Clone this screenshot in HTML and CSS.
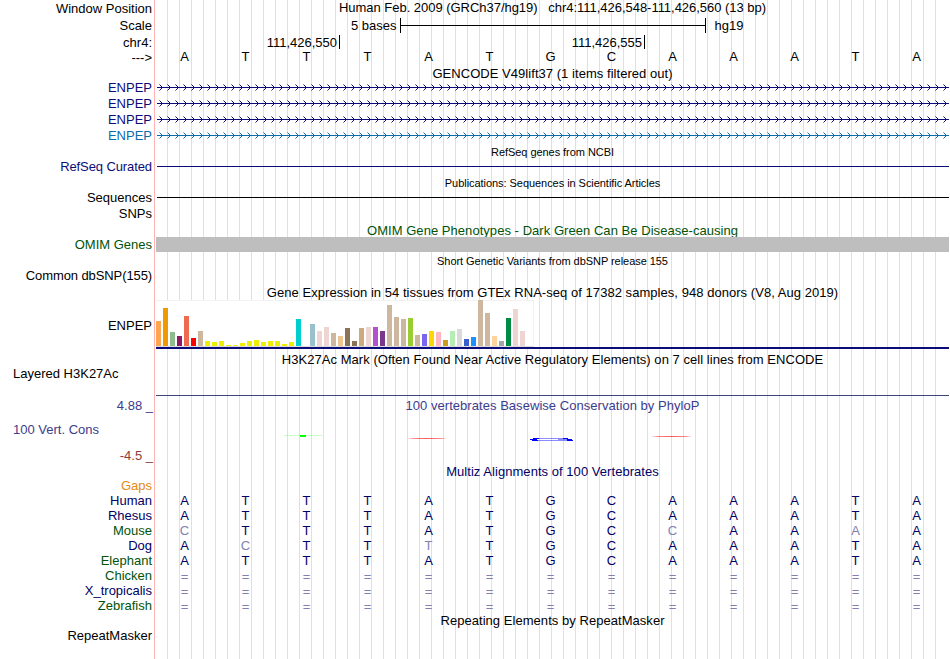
FILE: index.html
```html
<!DOCTYPE html>
<html lang="en">
<head>
<meta charset="utf-8">
<title>Genome Browser</title>
<link rel="stylesheet" href="styles.css">
</head>
<body>
<main class="browser" id="browser"></main>
<script src="tracks.js"></script>
</body>
</html>
```
FILE: styles.css
```css
* { box-sizing: border-box; }
body { margin: 0; background: #fff; }
.browser {
  width: 949px;
  height: 659px;
  overflow: hidden;
  display: flex;
  flex-direction: column;
  font-family: "Liberation Sans", Arial, sans-serif;
  font-size: 13px;
  color: #000;
  background:
    linear-gradient(#ffb4b4, #ffb4b4) 154px 0 / 1px 100% no-repeat,
    repeating-linear-gradient(90deg, #dcdcff 0 1px, transparent 1px 12px) 167px 0 / 780px 100% no-repeat;
}
.row { display: grid; grid-template-columns: 156px 793px; grid-template-rows: 100%; flex: none; white-space: pre; }
.label { display: flex; align-items: center; justify-content: flex-end; padding-right: 4px; line-height: 15px; min-width: 0; min-height: 0; }
.label.left { justify-content: flex-start; padding-left: 13px; }
.label.tick { padding-right: 3px; }
.label.raised { padding-bottom: 1px; }
.label.left.raised { padding-bottom: 2px; }
.label.lowered { padding-top: 2px; }
.label.high { padding-bottom: 11px; }
.label.snug { letter-spacing: -.1px; }
.data { display: flex; align-items: center; min-width: 0; min-height: 0; line-height: 15px; }
.title { justify-content: center; letter-spacing: .045px; }
.title.position { letter-spacing: -.03px; padding-bottom: 2px; }
.title.drop { padding-top: 2px; }
.title.end { padding-top: 0; }
.small { font-size: 11px; letter-spacing: -.05px; padding-top: 2px; }
.bases { display: grid; grid-template-columns: repeat(13, 61px); margin-left: -2px; text-align: center; }
.bases.up { align-items: start; margin-top: -1px; }
.bases.unaligned { padding-top: 1px; }
.data svg { display: block; flex: none; }
.navy { color: #0c0c78; }
.blue { color: #0b6cab; }
.green { color: #00540a; }
.purple { color: #3c3c8c; }
.maroon { color: #8c3c3c; }
.orange { color: #e68a13; }
.deep { color: #000064; }
.faded { color: #8080b1; }
.scale { padding-left: 195px; }
.scale svg { margin: 0 9px 0 3px; }
.mark { width: 184px; height: 14px; border-right: 1px solid #000; text-align: right; padding-right: 2px; }
.mark.next { width: 305px; }
.bar { background: #bebebe; }
.expression { align-items: flex-start; border-bottom: 2px solid #0c0c78; }
.chart { display: flex; align-items: flex-end; gap: 2px; width: 378px; height: 47px; background: #fff; border: 1px solid #f2f2f2; border-left: 0; border-bottom-color: #dcdcdc; overflow: visible; }
.chart i { width: 5px; flex: none; }
```
FILE: tracks.js
```js
const browser = document.getElementById('browser');

function row(height, label, labelClass, data, dataClass) {
  browser.insertAdjacentHTML('beforeend',
    `<div class="row" style="height:${height}px"><div class="label ${labelClass}">${label}</div>` +
    `<div class="data ${dataClass || ''}">${data || ''}</div></div>`);
}

function title(height, text, cls) { row(height, '', '', text, 'title ' + (cls || '')); }

// Lower-case letters are bases that differ from the reference.
function bases(height, label, labelClass, seq, cls) {
  const cells = [...seq].map(b =>
    `<span class="${/[a-z=]/.test(b) ? 'faded' : ''}">${b.toUpperCase()}</span>`).join('');
  row(height, label, labelClass, cells, 'bases ' + cls);
}

function gene(color, cls, id) {
  row(16, 'ENPEP', 'raised ' + cls,
    `<svg width="793" height="16" shape-rendering="crispEdges"><defs><pattern id="${id}" x="2" width="8" height="16" patternUnits="userSpaceOnUse">
    <g fill="${color}"><path d="M3 6h1v1h-1zM3 8h1v1h-1zM2 5h1v1h-1zM2 9h1v1h-1z"/><path opacity=".5" d="M1 4h1v1h-1zM1 10h1v1h-1z"/></g></pattern></defs>
    <rect x="2" width="791" height="16" fill="url(#${id})"/><path d="M1 7h792v1H1z" fill="${color}"/></svg>`);
}

function line(height, label, cls, y, color, x) {
  row(height, label, cls,
    `<svg width="793" height="${height}" shape-rendering="crispEdges"><path d="M${x} ${y}h793v1H${x}z" fill="${color}"/></svg>`);
}

title(16, 'Human Feb. 2009 (GRCh37/hg19)   chr4:111,426,548-111,426,560 (13 bp)', 'position');
browser.lastChild.firstChild.textContent = 'Window Position';
row(18, 'Scale', '',
  '<span>5 bases</span><svg width="306" height="15" shape-rendering="crispEdges"><path d="M0 0h1v15H0zM305 0h1v15h-1zM0 7h306v1H0z"/></svg><span>hg19</span>', 'scale');
row(16, 'chr4:', '', '<span class="mark">111,426,550</span><span class="mark next">111,426,555</span>');
bases(16, '---&gt;', 'raised', 'ATTTATGCAAATA', 'up');
title(14, 'GENCODE V49lift37 (1 items filtered out)');
gene('#0c0c78', 'navy', 'arrows-a');
gene('#0c0c78', 'navy', 'arrows-b');
gene('#0c0c78', 'navy', 'arrows-c');
gene('#0b6cab', 'blue', 'arrows-d');
title(15, 'RefSeq genes from NCBI', 'small');
line(16, 'RefSeq Curated', 'navy raised snug', 7, '#0c0c78', 1);
title(15, 'Publications: Sequences in Scientific Articles', 'small');
line(16, 'Sequences', 'raised', 7, '#000', 1);
row(16, 'SNPs', 'raised');
title(15, 'OMIM Gene Phenotypes - Dark Green Can Be Disease-causing', 'green drop');
row(15, 'OMIM Genes', 'green', '', 'bar');
title(16, 'Short Genetic Variants from dbSNP release 155', 'small');
row(16, 'Common dbSNP(155)', 'raised snug');
title(16, 'Gene Expression in 54 tissues from GTEx RNA-seq of 17382 samples, 948 donors (V8, Aug 2019)');

const tissues = [
  [25,'#ffa54f'],[38,'#ee9a00'],[14,'#8fbc8f'],[10,'#8b1c62'],[30,'#ee6a50'],[8,'#ff0000'],[15,'#cdb79e'],
  [5,'#eeee00'],[4,'#eeee00'],[5,'#eeee00'],[1,'#eeee00'],[1,'#eeee00'],[3,'#eeee00'],[5,'#eeee00'],
  [6,'#eeee00'],[4,'#eeee00'],[5,'#eeee00'],[5,'#eeee00'],[2,'#eeee00'],[4,'#eeee00'],[27,'#00cdcd'],
  [0,'#ee82ee'],[22,'#9ac0cd'],[15,'#eed5d2'],[19,'#eed5d2'],[13,'#cdb79e'],[10,'#eec591'],[18,'#8b7355'],
  [5,'#8b7355'],[18,'#cdaa7d'],[19,'#eed5d2'],[19,'#b452cd'],[15,'#7a378b'],[41,'#cdb79e'],[29,'#cdb79e'],
  [27,'#cdb79e'],[28,'#9acd32'],[11,'#cdb79e'],[12,'#7a67ee'],[15,'#ffd700'],[14,'#ffb6c1'],[6,'#cd9b1d'],
  [15,'#b4eeb4'],[17,'#d9d9d9'],[7,'#3a5fcd'],[9,'#1e90ff'],[46,'#cdb79e'],[33,'#cdb79e'],[10,'#ffd39b'],
  [5,'#a6a6a6'],[28,'#008b45'],[37,'#eed5d2'],[15,'#eed5d2'],[0,'#ff00ff']
];
row(49, 'ENPEP', 'lowered', '<div class="chart">' +
  tissues.map(([h, c]) => `<i style="height:${h}px;background:${c}"></i>`).join('') + '</div>', 'expression');

row(3, '', '');
title(15, 'H3K27Ac Mark (Often Found Near Active Regulatory Elements) on 7 cell lines from ENCODE');
row(14, 'Layered H3K27Ac', 'left raised');
row(14, '', '');
line(2, '', '', 0, '#3c4678', 0);
row(1, '', '');
row(15, '4.88 _', 'purple tick', '100 vertebrates Basewise Conservation by PhyloP', 'title purple');
row(9, '', '');
row(26, '100 Vert. Cons', 'left purple high',
  `<svg width="793" height="26"><defs>
  <linearGradient id="fade"><stop offset="0" stop-color="#f00" stop-opacity="0"/><stop offset=".15" stop-color="#f00" stop-opacity=".45"/><stop offset=".5" stop-color="#f00" stop-opacity=".65"/><stop offset=".85" stop-color="#f00" stop-opacity=".45"/><stop offset="1" stop-color="#f00" stop-opacity="0"/></linearGradient></defs>
  <path d="M128 13h38v1h-38z" fill="#0f0" opacity=".22"/><path d="M144 13h6v2h-6z" fill="#0f0"/>
  <path d="M251 16h40v1h-40z" fill="url(#fade)"/><path d="M495 14h41v1h-41z" fill="url(#fade)"/>
  <path d="M379 16h33v1h-33zM381 18h32v1h-32zM402 17h12v1h-12z" fill="#00f" opacity=".45"/><path d="M377 16h6v1h-6zM374 17h7v1h-7zM376 18h6v1h-6zM407 16h5v1h-5zM411 17h5v1h-5zM411 18h6v1h-6z" fill="#00f"/></svg>`);
row(14, '-4.5 _', 'maroon tick');
row(2, '', '');
title(14, 'Multiz Alignments of 100 Vertebrates', 'deep');
row(15, 'Gaps', 'orange');
[['Human', 'deep', 'ATTTATGCAAATA'], ['Rhesus', 'deep', 'ATTTATGCAAATA'], ['Mouse', 'green', 'cTTTATGCcAAaA'],
 ['Dog', 'deep', 'AcTTtTGCAAATA'], ['Elephant', 'green', 'ATTTATGCAAATA'], ['Chicken', 'green', '============='],
 ['X_tropicalis', 'deep', '============='], ['Zebrafish', 'green', '=============']
].forEach(([name, cls, seq]) => bases(15, name, cls, seq, seq[0] === '=' ? 'unaligned' : 'deep'));
title(15, 'Repeating Elements by RepeatMasker', 'end');
row(15, 'RepeatMasker', '');
```
